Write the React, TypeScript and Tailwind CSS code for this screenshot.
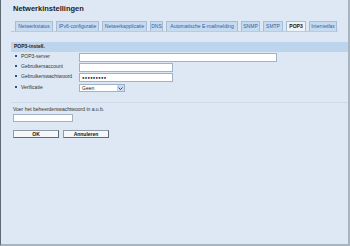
import React from 'react';

const tabs: { label: string; w: string }[] = [
  { label: 'Netwerkstatus', w: 'w-[38px]' },
  { label: 'IPv6-configuratie', w: 'w-[43px]' },
  { label: 'Netwerkapplicatie', w: 'w-[45px]' },
  { label: 'DNS', w: 'w-[13px]' },
  { label: 'Automatische E-mailmelding', w: 'w-[72px]' },
  { label: 'SNMP', w: 'w-[19px]' },
  { label: 'SMTP', w: 'w-[20px]' },
  { label: 'POP3', w: 'w-[20px]' },
  { label: 'Internetfax', w: 'w-[28px]' },
];

function Label({ text }: { text: string }) {
  return (
    <div className="flex w-[68px] items-center pl-[4px]">
      <span className="h-[2px] w-[2px] bg-[#2b4f8f]" />
      <span className="ml-[4px] text-[5px] leading-[6px] text-[#333]">{text}</span>
    </div>
  );
}

function Field({ w, children }: { w: string; children?: React.ReactNode }) {
  return (
    <div className={`${w} flex h-[9px] items-center border border-[#9fb2c6] bg-white pl-[2px]`}>
      {children}
    </div>
  );
}

export default function App() {
  return (
    <div
      className="h-[246px] w-[350px] overflow-hidden border-b-2 border-l border-r-2 border-b-[#a9b4c1] border-l-[#5e6873] border-r-[#a9b4c1] bg-[#dde8f4]"
      style={{ fontFamily: '"Liberation Sans", Arial, sans-serif' }}
    >
      <div className="ml-[10px]">
        <div className="h-[21px] pl-[2px] pt-[4px] text-[7.5px] font-bold leading-[10px] text-[#222]">
          Netwerkinstellingen
        </div>

        <div className="mr-[10px] flex gap-[3px] border-b border-[#bccbdc] pl-[4px]">
          {tabs.map((t) => (
            <div
              key={t.label}
              className={
                t.label === 'POP3'
                  ? `${t.w} flex h-[10px] shrink-0 items-center justify-center whitespace-nowrap border border-b-0 border-[#a8bdd5] bg-[#eef3f9] text-[5px] font-bold text-[#111]`
                  : `${t.w} flex h-[10px] shrink-0 items-center justify-center whitespace-nowrap border border-b-0 border-[#a8bdd5] bg-[#c7dbf0] text-[5px] text-[#2e5fa3]`
              }
            >
              {t.label}
            </div>
          ))}
        </div>

        <div className="mt-[10px] flex h-[10px] items-center bg-[#bcd4ec] pl-[3px] text-[5px] font-bold text-[#1d1d1d]">
          POP3-instell.
        </div>

        <div className="mt-[1px] flex h-[10px] items-start">
          <Label text="POP3-server" />
          <Field w="w-[198px]" />
        </div>
        <div className="flex h-[10px] items-start">
          <Label text="Gebruikersaccount" />
          <Field w="w-[94px]" />
        </div>
        <div className="flex h-[10px] items-start">
          <Label text="Gebruikerswachtwoord" />
          <Field w="w-[94px]">
            <span className="text-[4px] leading-[5px] tracking-[0.3px] text-black">●●●●●●●●●</span>
          </Field>
        </div>
        <div className="mt-[1px] flex h-[9px] items-start">
          <Label text="Verificatie" />
          <div className="flex h-[8px] w-[46px] items-center justify-between border border-[#9fb2c6] bg-white pl-[2px]">
            <span className="text-[5px] leading-[6px] text-[#222]">Geen</span>
            <span className="flex h-full w-[7px] items-center justify-center bg-[#c9dbf0]">
              <svg width="5" height="3" viewBox="0 0 5 3">
                <path d="M0.5 0.5 L2.5 2.5 L4.5 0.5" fill="none" stroke="#2a4f96" strokeWidth="1" />
              </svg>
            </span>
          </div>
        </div>

        <div className="mt-[9px] border-t border-[#cddbe9]" />

        <div className="mt-[3px] pl-[2px] text-[5px] leading-[6px] text-[#333]">
          Voer het beheerderswachtwoord in a.u.b.
        </div>
        <div className="ml-[2px] mt-[2px] h-[8px] w-[60px] border border-[#9fb2c6] bg-white" />

        <div className="ml-[2px] mt-[8px] flex gap-[4px]">
          <button className="flex h-[8px] w-[46px] items-center justify-center border border-[#8f9aa6] border-b-[#5f6a75] border-r-[#5f6a75] bg-[#f5f7f9] text-[5px] font-semibold leading-none text-[#111]">
            OK
          </button>
          <button className="flex h-[8px] w-[46px] items-center justify-center border border-[#8f9aa6] border-b-[#5f6a75] border-r-[#5f6a75] bg-[#f5f7f9] text-[5px] font-semibold leading-none text-[#111]">
            Annuleren
          </button>
        </div>
      </div>
    </div>
  );
}
